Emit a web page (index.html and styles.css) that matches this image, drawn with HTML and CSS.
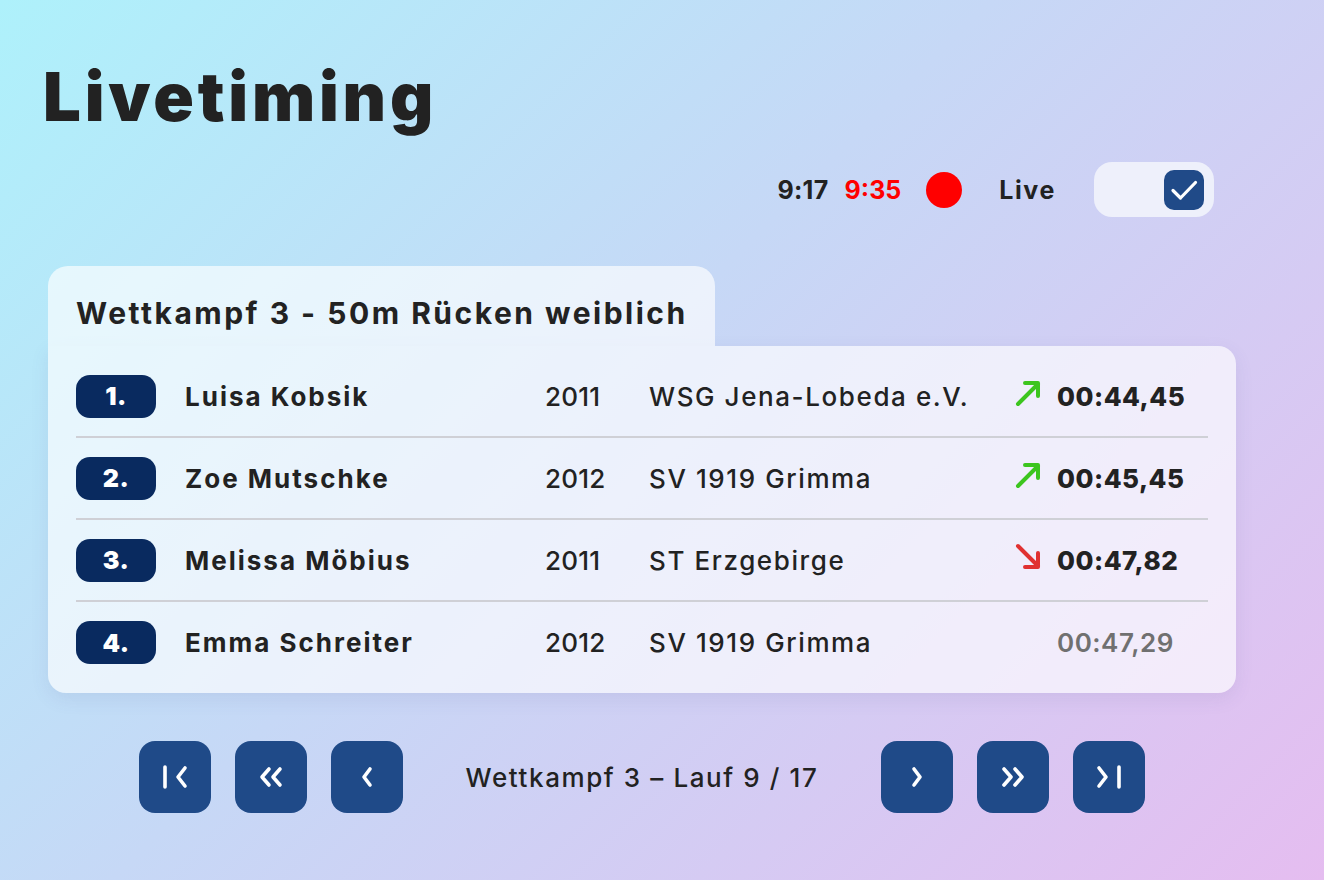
FILE: index.html
```html
<!DOCTYPE html>
<html lang="de">
<head>
<meta charset="utf-8">
<title>Livetiming</title>
<link rel="stylesheet" href="styles.css">
</head>
<body>
<main class="page">
  <h1 class="title">Livetiming</h1>

  <div class="status">
    <span class="clock">9:17</span>
    <span class="clock clock-red">9:35</span>
    <span class="rec-dot"></span>
    <span class="live-label">Live</span>
    <span class="toggle">
      <span class="checkbox">
        <svg width="40" height="40" viewBox="0 0 40 40"><path d="M9 20.5 L16.5 28 L31.5 12.5" fill="none" stroke="#fff" stroke-width="3.2" stroke-linecap="round" stroke-linejoin="round"/></svg>
      </span>
    </span>
  </div>

  <section class="board">
    <div class="tab"><h2 class="tab-title">Wettkampf 3 - 50m Rücken weiblich</h2></div>
    <div class="card">
      <div class="row">
        <span class="place">1.</span>
        <span class="name">Luisa Kobsik</span>
        <span class="year">2011</span>
        <span class="club">WSG Jena-Lobeda e.V.</span>
        <span class="trend">
          <svg width="28" height="28" viewBox="0 0 28 28"><path d="M4 25 L24 5 M11 4 H24 V17" fill="none" stroke="#3cc51e" stroke-width="4" stroke-linecap="round" stroke-linejoin="round"/></svg>
        </span>
        <span class="time">00:44,45</span>
      </div>
      <div class="row">
        <span class="place">2.</span>
        <span class="name">Zoe Mutschke</span>
        <span class="year">2012</span>
        <span class="club">SV 1919 Grimma</span>
        <span class="trend">
          <svg width="28" height="28" viewBox="0 0 28 28"><path d="M4 25 L24 5 M11 4 H24 V17" fill="none" stroke="#3cc51e" stroke-width="4" stroke-linecap="round" stroke-linejoin="round"/></svg>
        </span>
        <span class="time">00:45,45</span>
      </div>
      <div class="row">
        <span class="place">3.</span>
        <span class="name">Melissa Möbius</span>
        <span class="year">2011</span>
        <span class="club">ST Erzgebirge</span>
        <span class="trend">
          <svg width="28" height="28" viewBox="0 0 28 28"><path d="M4 3 L24 23 M24 10 V24 H11" fill="none" stroke="#e03131" stroke-width="4" stroke-linecap="round" stroke-linejoin="round"/></svg>
        </span>
        <span class="time">00:47,82</span>
      </div>
      <div class="row">
        <span class="place">4.</span>
        <span class="name">Emma Schreiter</span>
        <span class="year">2012</span>
        <span class="club">SV 1919 Grimma</span>
        <span class="trend"></span>
        <span class="time time-muted">00:47,29</span>
      </div>
    </div>
  </section>

  <nav class="pager">
    <button class="nav-btn" aria-label="Erster Lauf">
      <svg width="28" height="28" viewBox="0 0 28 28"><path d="M4 4 V24 M24 5 L17 14 L24 23" fill="none" stroke="#fff" stroke-width="3.6" stroke-linecap="round" stroke-linejoin="round"/></svg>
    </button>
    <button class="nav-btn" aria-label="Zurück 5">
      <svg width="28" height="28" viewBox="0 0 28 28"><path d="M12 6 L5 14 L12 22 M23 6 L16 14 L23 22" fill="none" stroke="#fff" stroke-width="3.6" stroke-linecap="round" stroke-linejoin="round"/></svg>
    </button>
    <button class="nav-btn" aria-label="Zurück">
      <svg width="28" height="28" viewBox="0 0 28 28"><path d="M17 6 L11 14 L17 22" fill="none" stroke="#fff" stroke-width="3.6" stroke-linecap="round" stroke-linejoin="round"/></svg>
    </button>
    <span class="pager-label">Wettkampf 3 – Lauf 9 / 17</span>
    <button class="nav-btn" aria-label="Weiter">
      <svg width="28" height="28" viewBox="0 0 28 28"><path d="M11 6 L17 14 L11 22" fill="none" stroke="#fff" stroke-width="3.6" stroke-linecap="round" stroke-linejoin="round"/></svg>
    </button>
    <button class="nav-btn" aria-label="Weiter 5">
      <svg width="28" height="28" viewBox="0 0 28 28"><path d="M5 6 L12 14 L5 22 M16 6 L23 14 L16 22" fill="none" stroke="#fff" stroke-width="3.6" stroke-linecap="round" stroke-linejoin="round"/></svg>
    </button>
    <button class="nav-btn" aria-label="Letzter Lauf">
      <svg width="28" height="28" viewBox="0 0 28 28"><path d="M4 5 L11 14 L4 23 M24 4 V24" fill="none" stroke="#fff" stroke-width="3.6" stroke-linecap="round" stroke-linejoin="round"/></svg>
    </button>
  </nav>
</main>
</body>
</html>
```

FILE: styles.css
```css
* { box-sizing: border-box; }

html, body {
  margin: 0;
  padding: 0;
  height: 100%;
}

body {
  background: linear-gradient(135deg, #aef1fb 0%, #c6d8f6 45%, #e5bdf0 100%);
  font-family: Inter, "Open Sans", "Liberation Sans", sans-serif;
  color: #222;
  min-height: 880px;
}

.page {
  width: 1324px;
  height: 880px;
  padding: 57px 88px 0 48px;
}

.title {
  margin: 0 0 0 -5px;
  font-size: 67px;
  font-weight: 900;
  line-height: 80px;
  letter-spacing: 3.8px;
  color: #222;
}

.status {
  display: flex;
  align-items: center;
  justify-content: flex-end;
  margin-top: 25px;
  margin-right: 22px;
  height: 55px;
  font-size: 25px;
  font-weight: 700;
}

.clock { letter-spacing: 0.3px; }
.clock-red { color: #ff0000; margin-left: 16px; letter-spacing: 0; }

.rec-dot {
  width: 36px;
  height: 36px;
  border-radius: 50%;
  background: #ff0000;
  margin-left: 25px;
}

.live-label { margin-left: 37px; letter-spacing: 1.6px; }

.toggle {
  display: flex;
  align-items: center;
  justify-content: flex-end;
  width: 120px;
  height: 55px;
  margin-left: 38px;
  padding-right: 10px;
  border-radius: 18px;
  background: #eef0fb;
}

.checkbox {
  display: flex;
  width: 40px;
  height: 40px;
  border-radius: 10px;
  background: #204a88;
}

.board {
  margin-top: 49px;
  width: 1188px;
}

.tab {
  display: inline-block;
  width: 667px;
  height: 80px;
  padding: 29px 0 0 28px;
  border-radius: 20px 20px 0 0;
  background: rgba(255, 255, 255, 0.66);
  vertical-align: top;
}

.tab-title {
  margin: 0;
  font-size: 30px;
  font-weight: 700;
  line-height: 36px;
  letter-spacing: 2.5px;
  color: #222;
  white-space: nowrap;
}

.card {
  display: flex;
  flex-direction: column;
  padding: 10px 28px 10px 28px;
  border-radius: 0 18px 18px 18px;
  background: rgba(255, 255, 255, 0.66);
  box-shadow: 0 6px 18px rgba(90, 90, 150, 0.10);
}

.row {
  display: grid;
  grid-template-columns: 109px 360px 104px 365px 28px 166px;
  align-items: center;
  height: 82px;
  border-bottom: 2px solid #cfd0d6;
  font-size: 26px;
}

.row:last-child { border-bottom: none; height: 81px; }

.place {
  display: flex;
  align-items: center;
  justify-content: center;
  width: 80px;
  height: 43px;
  border-radius: 14px;
  background: #092a5f;
  color: #fff;
  font-weight: 900;
  font-size: 25px;
  letter-spacing: 0.5px;
}

.name {
  font-weight: 700;
  letter-spacing: 2px;
  white-space: nowrap;
}

.year {
  font-weight: 500;
  letter-spacing: 0.2px;
}

.club {
  font-weight: 500;
  letter-spacing: 1.6px;
  white-space: nowrap;
}

.trend {
  display: flex;
  align-items: center;
  margin-top: -6px;
}

.time {
  margin-left: 15px;
  font-weight: 800;
  letter-spacing: 0.5px;
}

.time-muted {
  color: #707070;
  font-weight: 600;
}

.pager {
  display: flex;
  align-items: center;
  margin-top: 48px;
  width: 1188px;
  padding-left: 91px;
}

.nav-btn {
  display: flex;
  align-items: center;
  justify-content: center;
  width: 72px;
  height: 72px;
  margin-right: 24px;
  padding: 0;
  border: none;
  border-radius: 16px;
  background: #1f4a88;
  cursor: pointer;
}

.pager-label {
  width: 430px;
  margin-right: 24px;
  text-align: center;
  font-size: 26px;
  font-weight: 500;
  letter-spacing: 1.6px;
  color: #222;
  white-space: nowrap;
}
```
